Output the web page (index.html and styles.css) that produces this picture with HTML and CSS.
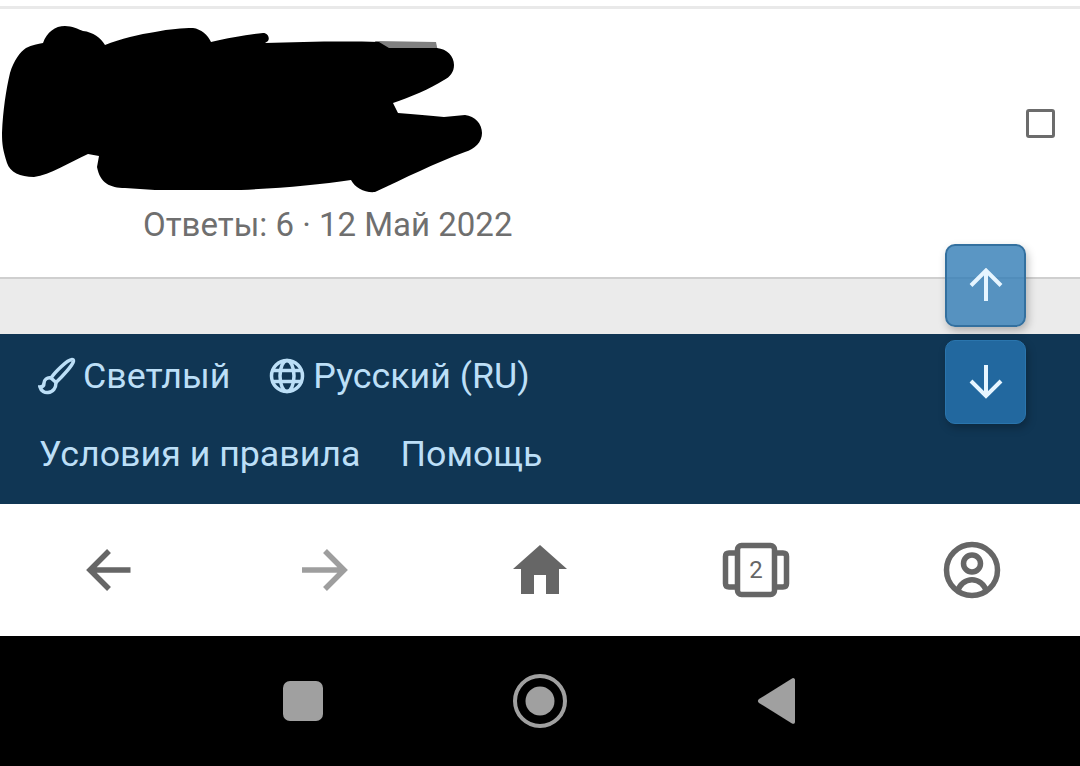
FILE: index.html
```html
<!DOCTYPE html>
<html lang="ru">
<head>
  <meta charset="UTF-8" />
  <meta name="viewport" content="width=device-width, initial-scale=1" />
  <title>Форум</title>
  <link rel="stylesheet" href="styles.css">
</head>
<body>
  <div class="page">

    <!-- Thread row -->
    <section class="thread-row">
      <div class="thread-main">
        <svg class="redacted" viewBox="0 9 490 190" aria-hidden="true">
          <path class="redacted-under" d="M375 41 L436 42 L438 52 L380 52 Z" />
          <path d="M43 43 C47 32 55 26 65 26 C72 26 78 29 83 31 C93 32 101 38 105 45 C120 39 140 34 155 32 C170 29 182 28 193 28 C201 29 208 35 211 42 C228 38 250 34 263 33 C268 33 270 38 268 41 L265 43 C300 42 340 41 379 42 L389 48 L437 48 C447 49 454 56 454 65 C454 72 450 77 444 80 C430 89 410 97 393 103 L398 113 C415 114 430 116 444 117 L465 115 C475 116 482 124 482 133 C482 142 475 149 465 152 C435 163 405 178 375 192 C365 193 355 188 351 180 C320 185 280 188 241 190 L155 190 L125 188 C110 188 100 183 97 167 L99 156 L88 154 C70 162 50 175 34 177 C20 177 10 172 7 163 C3 150 2 145 2 133 C3 110 6 90 10 73 C14 60 20 52 26 48 C32 45 38 44 43 43 Z" />
        </svg>
        <p class="thread-meta">Ответы: 6 · 12 Май 2022</p>
      </div>
      <span class="thread-check"></span>
    </section>

    <div class="spacer"></div>

    <!-- Footer -->
    <footer class="site-footer">
      <div class="footer-row">
        <a href="#" class="theme-link">
          <svg class="footer-icon" width="38" height="38" viewBox="0 0 38 38" aria-hidden="true">
            <path d="M34 2.5 C29 3 17 15 13 21 L18 25.5 C24 20 35 8 35.5 4 C35.6 3 35 2.5 34 2.5 Z" />
            <path d="M13 21 C9 20 6 23 6 26 C6 29 4 30 2 30 C3 34 7 36 10 35.5 C15 35 18 31 18 25.5" />
          </svg>
          Светлый
        </a>
        <a href="#">
          <svg class="footer-icon" width="36" height="36" viewBox="0 0 36 36" aria-hidden="true">
            <circle cx="18" cy="18" r="15.5" />
            <ellipse cx="18" cy="18" rx="7" ry="15.5" />
            <path d="M3.5 12.5 H32.5 M3.5 23.5 H32.5" />
          </svg>
          Русский (RU)
        </a>
      </div>
      <div class="footer-row footer-links">
        <a href="#">Условия и правила</a>
        <a href="#">Помощь</a>
      </div>
    </footer>

    <!-- Browser toolbar -->
    <nav class="toolbar">
      <a href="#">
        <svg width="48" height="48" viewBox="0 0 48 48" aria-hidden="true">
          <path class="line" d="M46.5 24 H8 M25 5 L6 24 L25 43" />
        </svg>
      </a>
      <a href="#" class="disabled">
        <svg width="48" height="48" viewBox="0 0 48 48" aria-hidden="true">
          <path class="line" d="M2 24 H42 M25 5 L44 24 L25 43" />
        </svg>
      </a>
      <a href="#">
        <svg width="56" height="50" viewBox="0 0 56 50" aria-hidden="true">
          <path class="solid" d="M28 0 L55 24 H47 V49 H34 V30 H22 V49 H9 V24 H1 Z" />
        </svg>
      </a>
      <a href="#">
        <svg width="68" height="56" viewBox="0 0 68 56" aria-hidden="true">
          <rect class="line" x="15.5" y="3.5" width="37" height="49" rx="4" />
          <path class="line" d="M15 11 H7 Q3.5 11 3.5 14.5 V41.5 Q3.5 45 7 45 H15 M53 11 H61 Q64.5 11 64.5 14.5 V41.5 Q64.5 45 61 45 H53" />
          <text class="tab-count" x="34" y="36" text-anchor="middle">2</text>
        </svg>
      </a>
      <a href="#">
        <svg width="58" height="58" viewBox="0 0 58 58" aria-hidden="true">
          <circle class="line" cx="29" cy="29" r="25.5" />
          <circle class="line" cx="29" cy="22.5" r="8.5" />
          <path class="line" d="M14 51 C20 34.5 38 34.5 44 51" />
        </svg>
      </a>
    </nav>

    <!-- Android navigation -->
    <div class="system-bar">
      <svg width="40" height="40" viewBox="0 0 40 40" aria-hidden="true">
        <rect width="40" height="40" rx="7" />
      </svg>
      <svg width="54" height="54" viewBox="0 0 54 54" aria-hidden="true">
        <circle class="ring" cx="27" cy="27" r="25" />
        <circle cx="27" cy="27" r="14.5" />
      </svg>
      <svg width="40" height="48" viewBox="0 0 40 48" aria-hidden="true">
        <path d="M36 1 C37.5 1 38 2 38 3 V45 C38 46 37 47.5 35 46.5 L2 26 C0.5 25 0.5 23 2 22 L35 1.5 Z" />
      </svg>
    </div>

    <!-- Scroll buttons -->
    <div class="scroll-buttons">
      <a href="#" class="scroll-btn scroll-up">
        <svg width="36" height="36" viewBox="0 0 36 36" aria-hidden="true">
          <path d="M18 33 V3.5 M3 17.5 L18 2.5 L33 17.5" />
        </svg>
      </a>
      <a href="#" class="scroll-btn scroll-down">
        <svg width="36" height="36" viewBox="0 0 36 36" aria-hidden="true">
          <path d="M18 1 V31 M3 17 L18 32 L33 17" />
        </svg>
      </a>
    </div>

  </div>
</body>
</html>
```

FILE: styles.css
```css
/* Reset and base */
* {
  margin: 0;
  padding: 0;
  box-sizing: border-box;
  font-family: Roboto, 'Liberation Sans', sans-serif;
}

body, html {
  height: 100%;
  background: #fff;
}

a {
  text-decoration: none;
  color: inherit;
}

.page {
  position: relative;
  height: 766px;
  overflow: hidden;
  padding-top: 6px;
  display: flex;
  flex-direction: column;
}

/* Thread row */
.thread-row {
  height: 273px;
  display: flex;
  justify-content: space-between;
  align-items: flex-start;
  padding-right: 25px;
  border-top: 3px solid #e9e9e9;
  border-bottom: 2px solid #cfcfcf;
}

.redacted {
  display: block;
  width: 490px;
  height: 190px;
  fill: #000;
}

.redacted-under {
  fill: #808080;
}

.thread-meta {
  margin-top: 7px;
  padding-left: 143px;
  font-size: 33px;
  line-height: 38px;
  color: #6f6f6f;
}

.thread-check {
  width: 29px;
  height: 29px;
  margin-top: 100px;
  border: 3px solid #6c6c6c;
  border-radius: 3px;
}

.spacer {
  height: 55px;
  background: #ebebeb;
}

/* Footer */
.site-footer {
  height: 170px;
  padding: 3px 38px 0;
  background: #103654;
  color: #bcdff7;
  font-size: 35.75px;
}

.footer-row {
  display: flex;
  align-items: center;
  gap: 39px;
  height: 78px;
}

.footer-row a {
  display: flex;
  align-items: center;
  gap: 8px;
}

.footer-row .theme-link {
  gap: 7px;
}

.footer-links {
  gap: 40px;
  padding-left: 1px;
}

.footer-icon {
  fill: none;
  stroke: currentColor;
  stroke-width: 3.5;
}

/* Browser toolbar */
.toolbar {
  height: 132px;
  display: flex;
  background: #fff;
  color: #666;
}

.toolbar a {
  flex: 1;
  display: flex;
  align-items: center;
  justify-content: center;
}

.toolbar .disabled {
  color: #9e9e9e;
}

.toolbar .line {
  fill: none;
  stroke: currentColor;
  stroke-width: 5.5;
}

.toolbar .solid {
  fill: currentColor;
}

.tab-count {
  font-size: 24px;
  fill: currentColor;
}

/* Android navigation */
.system-bar {
  height: 130px;
  display: flex;
  align-items: center;
  justify-content: center;
  gap: 190px;
  background: #000;
  fill: #a0a0a0;
}

.system-bar .ring {
  fill: none;
  stroke: #a0a0a0;
  stroke-width: 4;
}

/* Scroll buttons */
.scroll-buttons {
  position: absolute;
  top: 244px;
  right: 54px;
  display: flex;
  flex-direction: column;
  gap: 13px;
}

.scroll-btn {
  width: 81px;
  height: 83px;
  display: flex;
  align-items: center;
  justify-content: center;
  border-radius: 10px;
  box-shadow: 2px 4px 8px rgba(0,0,0,0.25);
}

.scroll-btn svg {
  fill: none;
  stroke: #e6f5ff;
  stroke-width: 4;
}

.scroll-up {
  background: rgba(49,124,181,0.8);
  border: 2px solid #33709f;
}

.scroll-down {
  height: 84px;
  background: #22689f;
  border: 1px solid #2a75ad;
}
```
